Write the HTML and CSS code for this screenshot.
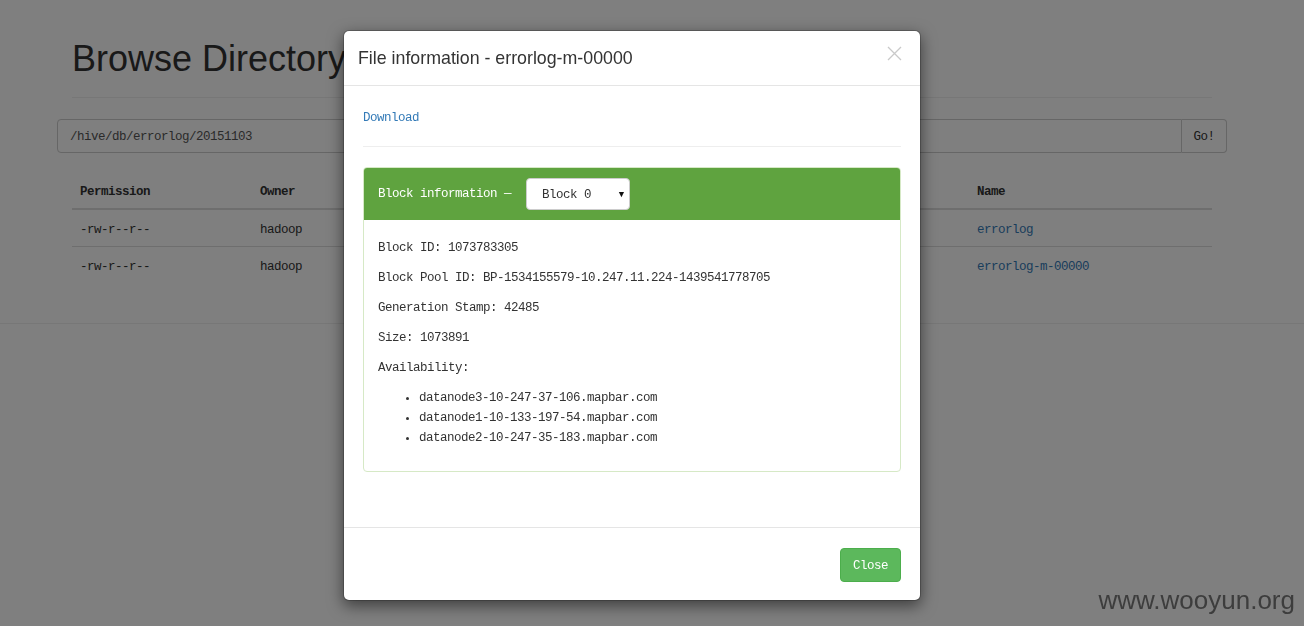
FILE: index.html
```html
<!DOCTYPE html>
<html>
<head>
<meta charset="utf-8">
<title>Browse Directory</title>
<link rel="stylesheet" href="styles.css">
</head>
<body>
<div class="page">
  <div class="container">
    <div class="page-header"><h1>Browse Directory</h1></div>
    <form class="search">
      <div class="search-input">/hive/db/errorlog/20151103</div>
      <div class="search-btn">Go!</div>
    </form>
    <table class="listing">
      <colgroup>
        <col class="c-perm"><col class="c-owner"><col class="c-mid"><col class="c-mid"><col class="c-mid"><col class="c-mid"><col class="c-mid"><col class="c-name">
      </colgroup>
      <thead>
        <tr><th>Permission</th><th>Owner</th><th></th><th></th><th></th><th></th><th></th><th>Name</th></tr>
      </thead>
      <tbody>
        <tr><td>-rw-r--r--</td><td>hadoop</td><td></td><td></td><td></td><td></td><td></td><td><a href="#">errorlog</a></td></tr>
        <tr><td>-rw-r--r--</td><td>hadoop</td><td></td><td></td><td></td><td></td><td></td><td><a href="#">errorlog-m-00000</a></td></tr>
      </tbody>
    </table>
  </div>
  <div class="page-rule"></div>
</div>

<div class="backdrop"></div>

<div class="modal">
  <div class="modal-header">
    <h4 class="modal-title">File information - errorlog-m-00000</h4>
    <svg class="modal-close" width="15" height="15" viewBox="0 0 15 15"><path d="M1 1 L14 14 M14 1 L1 14" stroke="#c9c9c9" stroke-width="1.3" fill="none"/></svg>
  </div>
  <div class="modal-body">
    <p class="dl"><a href="#">Download</a></p>
    <hr class="sep">
    <div class="panel">
      <div class="panel-heading">
        <span>Block information —</span>
        <div class="select"><span>Block 0</span><span class="caret">▼</span></div>
      </div>
      <div class="panel-body">
        <p>Block ID: 1073783305</p>
        <p>Block Pool ID: BP-1534155579-10.247.11.224-1439541778705</p>
        <p>Generation Stamp: 42485</p>
        <p>Size: 1073891</p>
        <p>Availability:</p>
        <ul>
          <li>datanode3-10-247-37-106.mapbar.com</li>
          <li>datanode1-10-133-197-54.mapbar.com</li>
          <li>datanode2-10-247-35-183.mapbar.com</li>
        </ul>
      </div>
    </div>
  </div>
  <div class="modal-footer">
    <span class="btn-close">Close</span>
  </div>
</div>

<div class="watermark">www.wooyun.org</div>
</body>
</html>
```
FILE: styles.css
```css
html, body {
  margin: 0;
  padding: 0;
}
body {
  background: #fff;
  color: #333;
  font-family: "Liberation Mono", "DejaVu Sans Mono", monospace;
  font-size: 12.5px;
  letter-spacing: -0.5px;
  line-height: 20px;
  overflow: hidden;
  height: 626px;
}
a {
  color: #337ab7;
  text-decoration: none;
}
.page {
  padding-top: 39px;
}
.container {
  width: 1140px;
  margin-left: 72px;
}
.page-header {
  border-bottom: 1px solid #eee;
  padding-bottom: 18px;
}
.page-header h1 {
  margin: 0;
  font-family: "Liberation Sans", Arial, sans-serif;
  font-weight: 500;
  font-size: 36px;
  line-height: 40px;
  letter-spacing: 0;
  color: #333;
}
.search {
  display: flex;
  margin: 21px -15px 0;
  height: 34px;
}
.search-input {
  flex: 1;
  border: 1px solid #ccc;
  border-radius: 4px 0 0 4px;
  padding: 7px 12px 5px;
  color: #555;
}
.search-btn {
  width: 44px;
  border: 1px solid #ccc;
  border-left: 0;
  border-radius: 0 4px 4px 0;
  display: flex;
  align-items: center;
  justify-content: center;
  padding-top: 1px;
  color: #333;
}
.listing {
  width: 1140px;
  table-layout: fixed;
  border-collapse: collapse;
  margin-top: 19px;
}
.c-perm { width: 180px; }
.c-owner { width: 122px; }
.c-mid { width: 119px; }
.c-name { width: 243px; }
.listing th, .listing td {
  padding: 10px 8px 6px;
  height: 20px;
  text-align: left;
  white-space: nowrap;
  overflow: hidden;
}
.listing th {
  font-weight: bold;
  border-bottom: 2px solid #ddd;
}
.listing td {
  border-top: 1px solid #ddd;
}
.page-rule {
  margin-top: 40px;
  border-top: 1px solid #eee;
}
.backdrop {
  position: fixed;
  inset: 0;
  background: rgba(0, 0, 0, 0.5);
}
.modal {
  position: absolute;
  top: 30px;
  left: 343px;
  width: 576px;
  background: #fff;
  border: 1px solid rgba(0, 0, 0, 0.2);
  border-radius: 6px;
  box-shadow: 0 5px 15px rgba(0, 0, 0, 0.5);
  background-clip: padding-box;
}
.modal-header {
  position: relative;
  padding: 15px 15px 15px 14px;
  border-bottom: 1px solid #e5e5e5;
}
.modal-title {
  margin: 0;
  font-family: "Liberation Sans", Arial, sans-serif;
  font-weight: 500;
  font-size: 17.8px;
  line-height: 24px;
  letter-spacing: 0;
  color: #333;
}
.modal-close {
  position: absolute;
  top: 15px;
  right: 18px;
}
.modal-body {
  padding: 20px 19px 55px;
}
.dl {
  margin: 0;
  padding-top: 2px;
}
.sep {
  margin: 18px 0 20px;
  border: 0;
  border-top: 1px solid #eee;
}
.panel {
  border: 1px solid #d6e9c6;
  border-radius: 4px;
}
.panel-heading {
  background: #5fa33f;
  color: #fff;
  padding: 10px 14px;
  display: flex;
  align-items: center;
  gap: 15px;
  border-radius: 3px 3px 0 0;
}
.select {
  width: 87px;
  height: 30px;
  padding-left: 15px;
  border: 1px solid #ccc;
  border-radius: 4px;
  background: #fff;
  color: #333;
  display: flex;
  align-items: center;
  justify-content: space-between;
}
.select span {
  padding-top: 2px;
}
.caret {
  font-size: 9px;
  letter-spacing: 0;
  margin-right: 5px;
  color: #111;
}
.panel-body {
  padding: 18px 14px 13px;
}
.panel-body p {
  margin: 0 0 10px;
}
.panel-body ul {
  margin: 0 0 10px;
  padding-left: 41px;
}
.modal-footer {
  border-top: 1px solid #e5e5e5;
  padding: 20px 19px 18px;
  display: flex;
  justify-content: flex-end;
}
.btn-close {
  display: inline-flex;
  align-items: center;
  justify-content: center;
  width: 61px;
  height: 34px;
  padding-top: 1px;
  box-sizing: border-box;
  background: #5cb85c;
  border: 1px solid #4cae4c;
  border-radius: 4px;
  color: #fff;
}
.watermark {
  position: fixed;
  right: 9px;
  bottom: 11px;
  font-family: "Liberation Sans", Arial, sans-serif;
  font-size: 26px;
  line-height: 30px;
  letter-spacing: 0;
  color: #3d3d3d;
}
```
